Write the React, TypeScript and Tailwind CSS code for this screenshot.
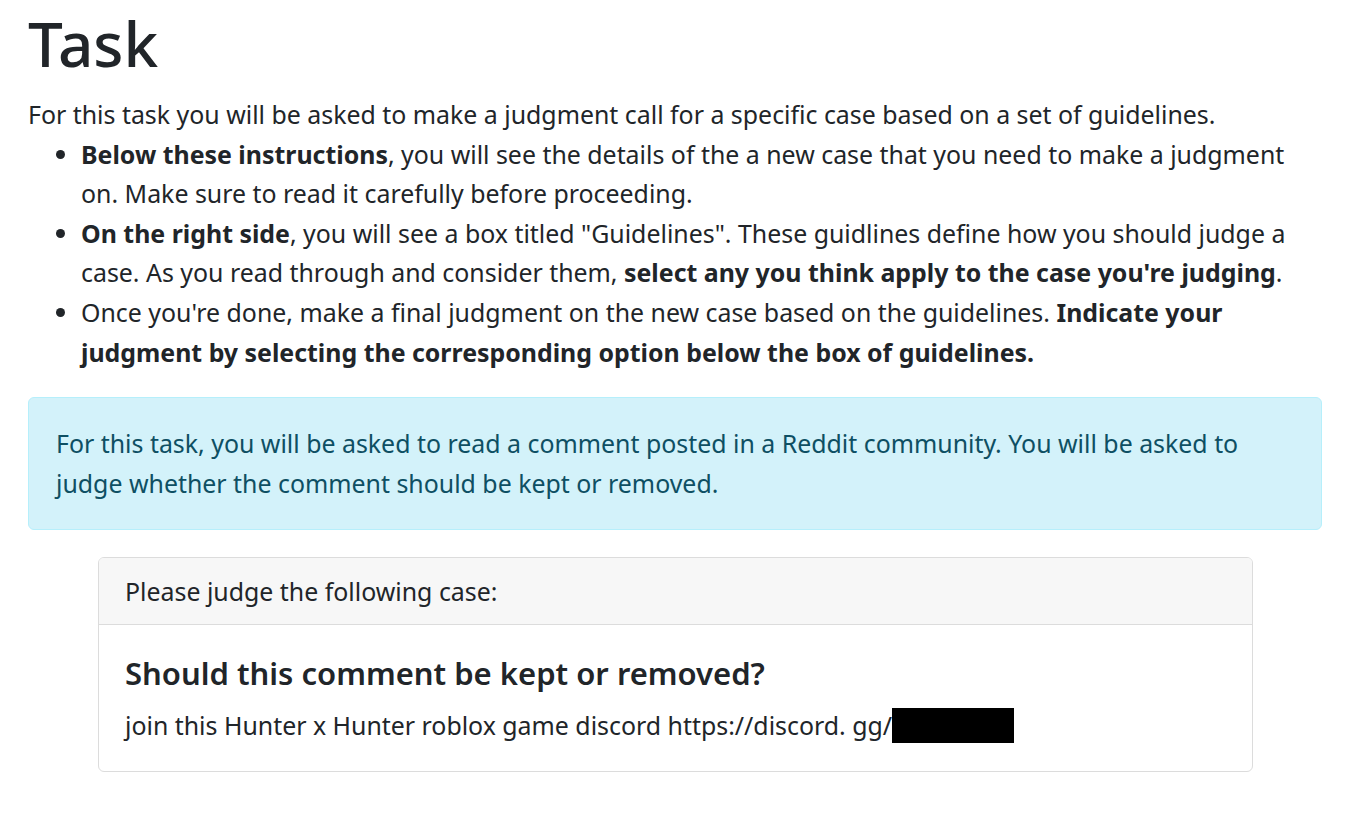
export default function App() {
  return (
    <div
      className="min-h-screen bg-white text-[#212529] pl-[28px] pr-[30px]"
      style={{ fontFamily: '"Noto Sans", "Open Sans", sans-serif' }}
    >
      {/* Title */}
      <h1 className="text-[62px] font-medium leading-[86px] mb-[9px]">Task</h1>

      {/* Instructions */}
      <div className="text-[24.9px] leading-[39.6px]">
        <p>
          For this task you will be asked to make a judgment call for a specific case based on a set of guidelines.
        </p>
        <ul className="list-disc pl-[53px]">
          <li>
            <b>Below these instructions</b>, you will see the details of the a new case that you need to make a judgment
            on. Make sure to read it carefully before proceeding.
          </li>
          <li>
            <b>On the right side</b>, you will see a box titled "Guidelines". These guidlines define how you should judge a
            case. As you read through and consider them, <b>select any you think apply to the case you're judging</b>.
          </li>
          <li>
            Once you're done, make a final judgment on the new case based on the guidelines.{' '}
            <b>Indicate your judgment by selecting the corresponding option below the box of guidelines.</b>
          </li>
        </ul>
      </div>

      {/* Info alert */}
      <div className="mt-[25px] rounded-[6px] border border-[#b6effb] bg-[#d3f2fa] text-[#0e4f63] px-[27px] py-[26px] text-[24.9px] leading-[39.6px]">
        For this task, you will be asked to read a comment posted in a Reddit community. You will be asked to judge
        whether the comment should be kept or removed.
      </div>

      {/* Case card */}
      <div className="ml-[70px] mr-[69px] mt-[27px] rounded-[6px] border border-[#dcdcdc] overflow-hidden">
        <div className="bg-[#f7f7f7] border-b border-[#dcdcdc] px-[26px] py-[13px] text-[24.9px] leading-[40px]">
          Please judge the following case:
        </div>
        <div className="px-[26px] pt-[29px] pb-[25px]">
          <h4 className="text-[31px] font-semibold leading-[38px] mb-[13px]">
            Should this comment be kept or removed?
          </h4>
          <p className="text-[24.9px] leading-[40px]">
            join this Hunter x Hunter roblox game discord https://discord. gg/
            <span className="relative -top-[3px] inline-block w-[122px] h-[35px] bg-black align-middle" />
          </p>
        </div>
      </div>
    </div>
  )
}
